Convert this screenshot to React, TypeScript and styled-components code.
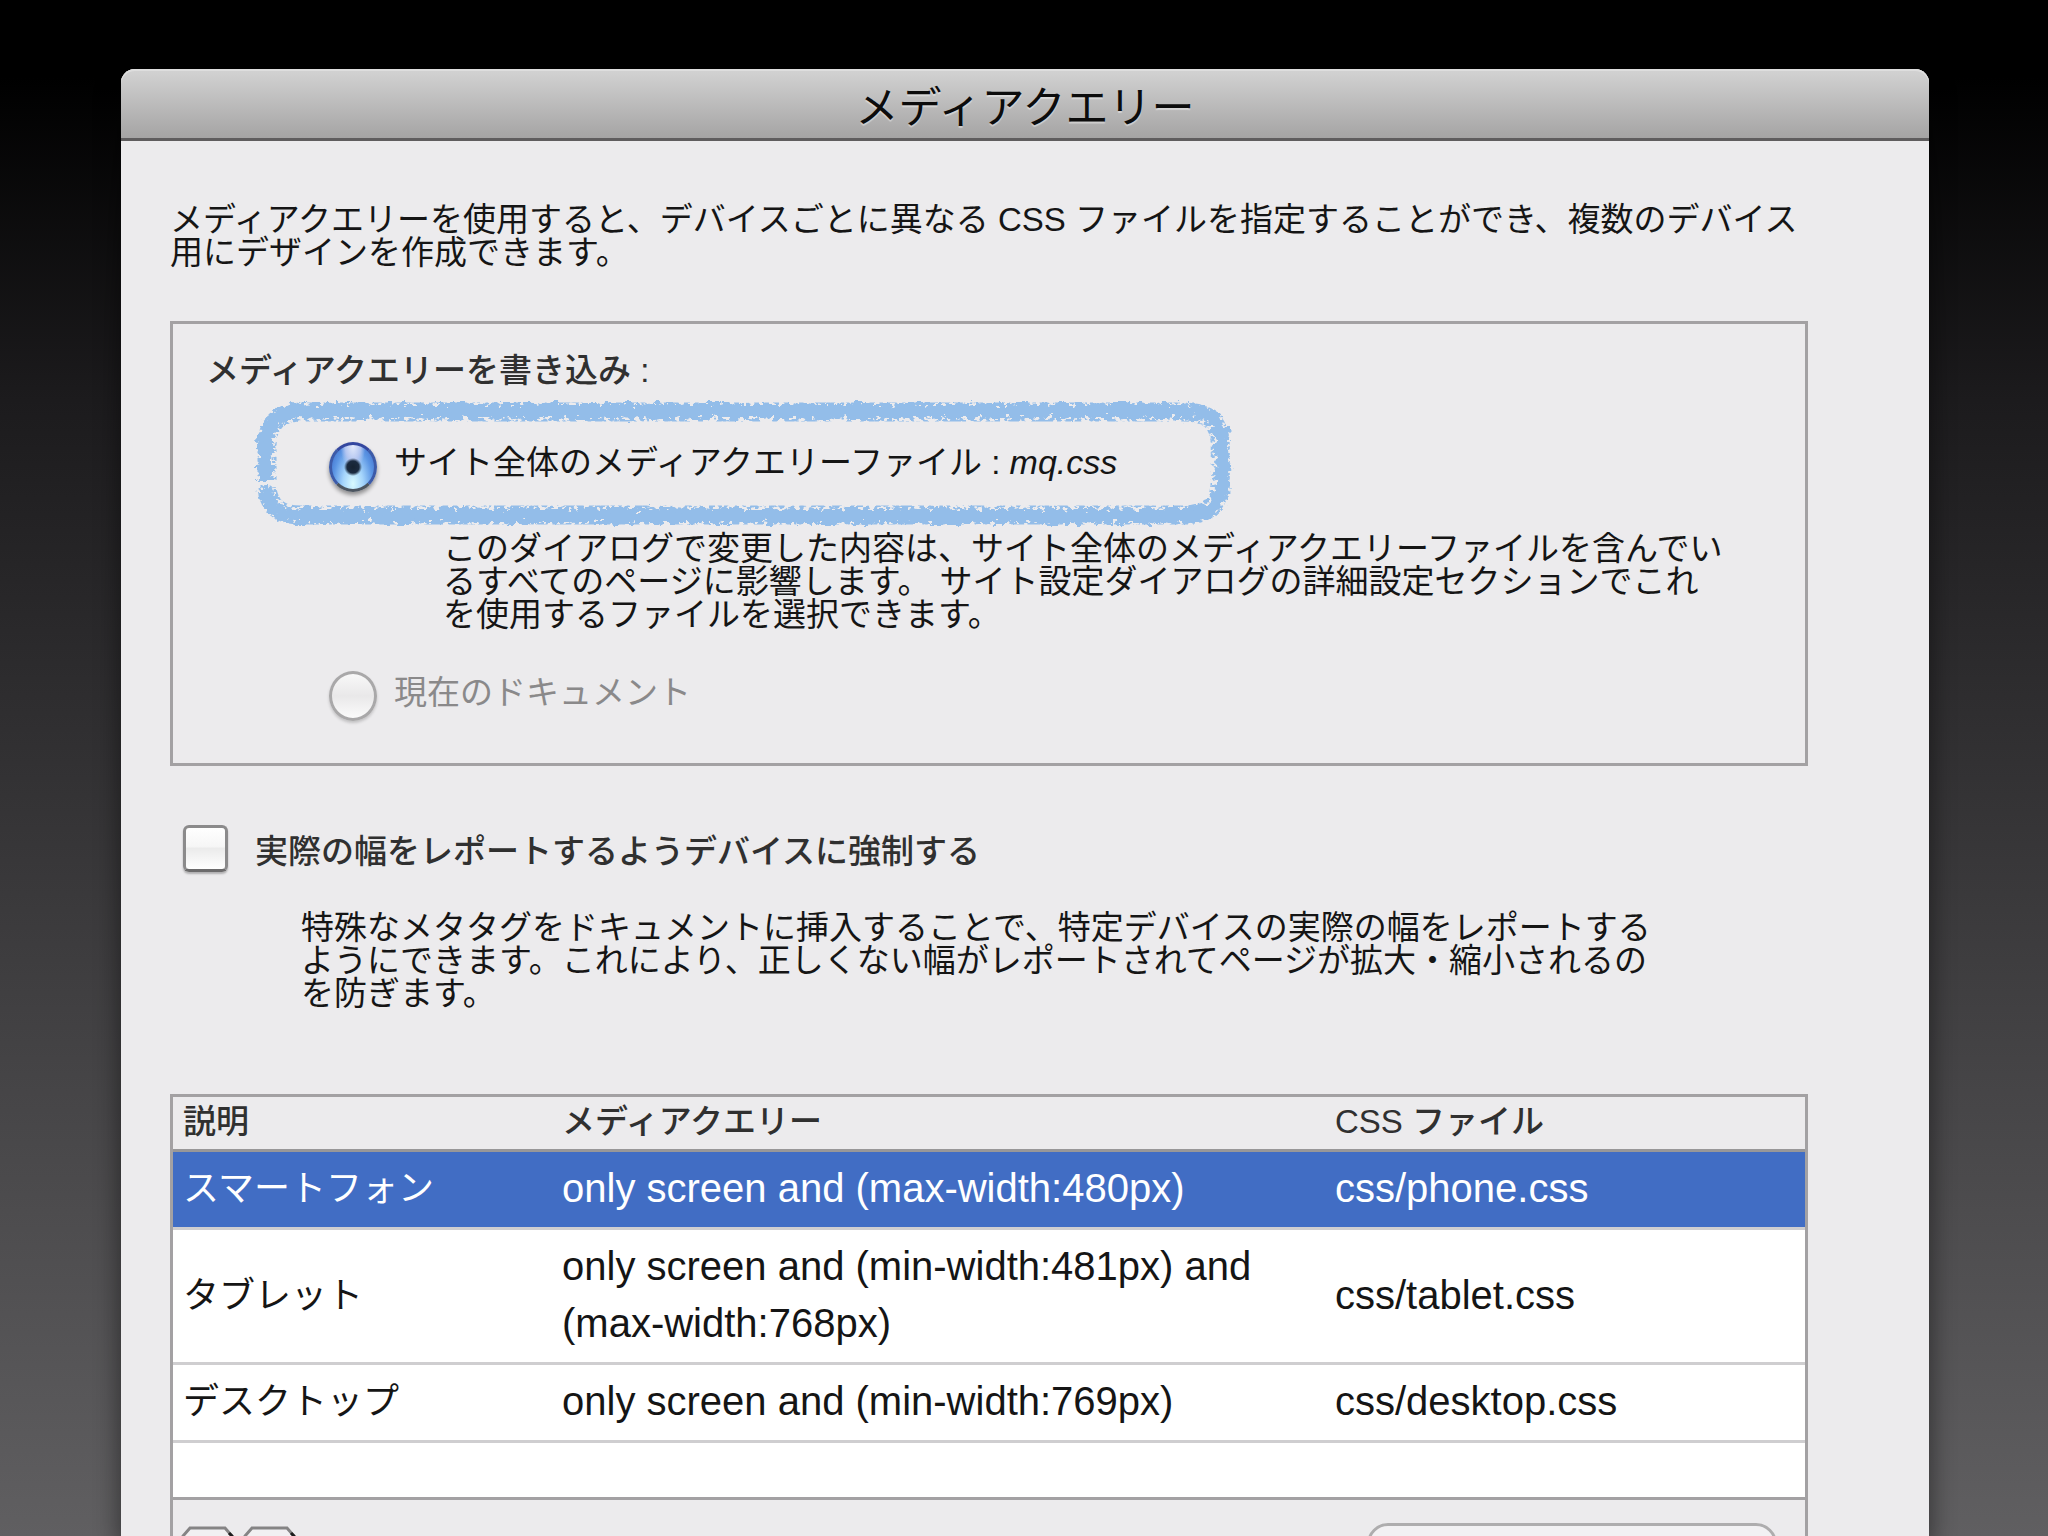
import React, { useState } from "react";
import styled, { createGlobalStyle, css } from "styled-components";

const GlobalStyle = createGlobalStyle`
  * { box-sizing: border-box; }
  body {
    margin: 0;
    font-family: "Liberation Sans", "Noto Sans CJK JP", sans-serif;
    font-size: 33px;
    line-height: 33px;
    color: #151515;
  }
`;

const Desktop = styled.div`
  display: flex;
  height: 100vh;
  overflow: hidden;
  padding: 69px 119px 0 121px;
  background: linear-gradient(#000 0, #000 5%, #1c1b1d 26%, #454446 70%, #605f61 100%);
`;

const Dialog = styled.main`
  flex: 1;
  min-width: 0;
  background: #ecebed;
  border-radius: 14px 14px 0 0;
  box-shadow: 0 10px 24px 2px rgba(0, 0, 0, 0.45);
`;

const TitleBar = styled.header`
  display: flex;
  justify-content: center;
  align-items: center;
  height: 72px;
  padding-top: 10px;
  border-bottom: 3px solid #5f5d5e;
  border-radius: 14px 14px 0 0;
  background: linear-gradient(#d3d3d3, #a5a4a4);
  box-shadow: inset 0 2px 0 #dedede;
`;

const Title = styled.h1`
  margin: 0;
  font-size: 43px;
  line-height: 43px;
  font-weight: 400;
  color: #0c0c0c;
  text-shadow: 0 2px 1px rgba(255, 255, 255, 0.4);
`;

const Content = styled.div`
  padding: 62px 121px 0 49px;
`;

const Paragraph = styled.p<{ $indent?: number }>`
  margin: 0;
  padding-left: ${(p) => p.$indent ?? 0}px;
  white-space: nowrap;
`;

const Group = styled.fieldset`
  margin: 52px 0 0;
  padding: 30px 30px 42px 33px;
  border: 3px solid #a3a1a3;
  min-width: 0;
`;

const Legend = styled.legend`
  float: left;
  width: 100%;
  padding: 0;
  font-weight: 500;
  color: #303030;
`;

const GroupBody = styled.div`
  clear: both;
  display: flex;
  flex-direction: column;
  align-items: flex-start;
  padding: 13px 0 0 48px;
`;

const Option = styled.label<{ $disabled?: boolean }>`
  position: relative;
  display: flex;
  align-items: center;
  gap: 17px;
  padding: 0 114px 0 75px;
  color: ${(p) => (p.$disabled ? "#8a898a" : "inherit")};
`;

const MarkedOption = styled(Option)`
  height: 125px;
`;

const FileName = styled.em`
  font-size: 34px;
`;

const OptionNote = styled(Paragraph)`
  margin: 7px 0 32px;
`;

const Marker = styled.svg`
  position: absolute;
  inset: 0;
  width: 100%;
  height: 100%;
  overflow: visible;
  pointer-events: none;
`;

const Radio = styled.input`
  appearance: none;
  flex: none;
  width: 48px;
  height: 50px;
  margin: 8px 0 0;
  border: 3px solid #a9a8a9;
  border-radius: 50%;
  background: linear-gradient(#f8f8f8, #e9e8e9 50%, #fbfbfb);
  box-shadow: 0 2px 3px rgba(0, 0, 0, 0.18);

  &:checked {
    border-color: #34479f #3d5ba8 #4c5560;
    background:
      radial-gradient(circle at 50% 50%, #162332 0, #1b2b40 6px, rgba(27, 43, 64, 0) 9px),
      radial-gradient(ellipse at 50% 0%, #e6ecfb 0, #b3c6f1 26%, rgba(120, 160, 230, 0) 42%),
      radial-gradient(ellipse at 50% 88%, #d8faff 0, #a4d4fb 34%, #5c96e4 66%, #3763c4 100%);
    box-shadow: 0 3px 4px rgba(0, 0, 0, 0.4);
  }
`;

const CheckRow = styled.label`
  display: flex;
  align-items: center;
  gap: 27px;
  margin: 59px 0 33px;
  padding-left: 13px;
  font-weight: 500;
  color: #303030;
`;

const Checkbox = styled.input`
  appearance: none;
  flex: none;
  width: 45px;
  height: 47px;
  margin: 0 0 6px;
  border: 3px solid #8b8a8b;
  border-bottom-color: #6c6b6c;
  border-radius: 6px;
  background: linear-gradient(#fff, #f6f6f6 45%, #ebebeb 50%, #fff);
  box-shadow: 0 2px 2px rgba(0, 0, 0, 0.25);

  &:checked {
    background: #5c96e4;
  }
`;

const ListPanel = styled.section`
  margin-top: 84px;
  border: 3px solid #a3a1a3;
  border-bottom: 0;
`;

const Table = styled.table`
  width: 100%;
  table-layout: fixed;
  border-collapse: separate;
  border-spacing: 0;
  background: #fff;
`;

const HeadCell = styled.th<{ $width?: number }>`
  width: ${(p) => (p.$width ? `${p.$width}px` : "auto")};
  height: 55px;
  padding: 0 10px 4px;
  text-align: left;
  font-weight: 500;
  color: #303030;
  background: #ecebed;
  border-bottom: 3px solid #989798;
`;

const Row = styled.tr<{ $selected?: boolean }>`
  cursor: default;
  ${(p) =>
    p.$selected &&
    css`
      color: #fff;
      background: #416dc4;
    `}
`;

const Cell = styled.td<{ $latin?: boolean }>`
  height: 78px;
  padding: 8px 10px 10px;
  font-size: ${(p) => (p.$latin ? 40 : 36)}px;
  line-height: 57px;
  border-bottom: 3px solid #cfced0;
`;

const BlankCell = styled.td`
  height: 57px;
  padding: 0;
  border-bottom: 3px solid #a3a1a3;
`;

const PanelFooter = styled.footer`
  display: flex;
  align-items: flex-start;
  padding: 23px 28px 0 8px;
`;

const SmallButtons = styled.div`
  display: flex;
  gap: 9px;
  padding-top: 3px;
  margin-right: auto;
`;

const SmallButton = styled.button`
  width: 53px;
  height: 53px;
  padding: 0;
  border: 0;
  background: none;
`;

const PresetButton = styled.button`
  width: 410px;
  height: 60px;
  border: 3px solid #aeadae;
  border-radius: 21px;
  background: #f2f1f3;
`;

const rows = [
  { name: "スマートフォン", query: "only screen and (max-width:480px)", file: "css/phone.css" },
  { name: "タブレット", query: "only screen and (min-width:481px) and (max-width:768px)", file: "css/tablet.css" },
  { name: "デスクトップ", query: "only screen and (min-width:769px)", file: "css/desktop.css" },
];

function CrayonOutline() {
  return (
    <Marker viewBox="0 0 976 125" preserveAspectRatio="none" aria-hidden="true">
      <defs>
        <filter id="crayon" x="-2%" y="-12%" width="104%" height="124%">
          <feTurbulence type="fractalNoise" baseFrequency="0.14 0.18" numOctaves="3" seed="7" result="noise" />
          <feDisplacementMap in="SourceGraphic" in2="noise" scale="15" xChannelSelector="R" yChannelSelector="G" />
        </filter>
        <filter id="flecks" x="-2%" y="-12%" width="104%" height="124%">
          <feTurbulence type="fractalNoise" baseFrequency="0.2 0.26" numOctaves="2" seed="21" />
          <feColorMatrix type="matrix" values="0 0 0 0 0  0 0 0 0 0  0 0 0 0 0  14 0 0 0 -6.6" result="grain" />
          <feComposite in="SourceGraphic" in2="grain" operator="in" />
        </filter>
      </defs>
      <g fill="none" stroke="#93bde9" strokeLinecap="butt">
        <path
          filter="url(#crayon)"
          strokeWidth="14"
          d="M11 88 C13 107 23 116 45 116 H930 C956 116 967 104 967 80 V46 C967 22 956 11 930 11 H49 C23 11 11 22 11 46 V80"
        />
        <path
          filter="url(#flecks)"
          strokeWidth="19"
          d="M13 88 C15 106 25 115 47 115 H928 C954 115 965 103 965 80 V46 C965 23 954 12 928 12 H49 C25 12 13 23 13 46 V80"
        />
      </g>
    </Marker>
  );
}

function BevelFrame() {
  return (
    <svg width="53" height="53" viewBox="0 0 53 53" fill="none" aria-hidden="true">
      <path d="M2 44V10L9 2H44L51 10V44L44 51H9Z" fill="#f1f0f2" stroke="#858485" strokeWidth="3" />
      <path d="M48 7L51 10V44" stroke="#1c1c1c" strokeWidth="3" />
    </svg>
  );
}

export default function App() {
  const [selected, setSelected] = useState(0);
  return (
    <>
      <GlobalStyle />
      <Desktop>
        <Dialog>
          <TitleBar>
            <Title>メディアクエリー</Title>
          </TitleBar>
          <Content>
            <Paragraph>
              メディアクエリーを使用すると、デバイスごとに異なる CSS ファイルを指定することができ、複数のデバイス
              <br />
              用にデザインを作成できます。
            </Paragraph>

            <Group>
              <Legend>メディアクエリーを書き込み :</Legend>
              <GroupBody>
                <MarkedOption>
                  <CrayonOutline />
                  <Radio type="radio" name="target" defaultChecked />
                  <span>
                    サイト全体のメディアクエリーファイル : <FileName>mq.css</FileName>
                  </span>
                </MarkedOption>
                <OptionNote $indent={189}>
                  このダイアログで変更した内容は、サイト全体のメディアクエリーファイルを含んでい
                  <br />
                  るすべてのページに影響します。 サイト設定ダイアログの詳細設定セクションでこれ
                  <br />
                  を使用するファイルを選択できます。
                </OptionNote>
                <Option $disabled>
                  <Radio type="radio" name="target" disabled />
                  <span>現在のドキュメント</span>
                </Option>
              </GroupBody>
            </Group>

            <CheckRow>
              <Checkbox type="checkbox" />
              <span>実際の幅をレポートするようデバイスに強制する</span>
            </CheckRow>
            <Paragraph $indent={131}>
              特殊なメタタグをドキュメントに挿入することで、特定デバイスの実際の幅をレポートする
              <br />
              ようにできます。これにより、正しくない幅がレポートされてページが拡大・縮小されるの
              <br />
              を防ぎます。
            </Paragraph>

            <ListPanel>
              <Table>
                <thead>
                  <tr>
                    <HeadCell $width={379}>説明</HeadCell>
                    <HeadCell $width={773}>メディアクエリー</HeadCell>
                    <HeadCell>CSS ファイル</HeadCell>
                  </tr>
                </thead>
                <tbody>
                  {rows.map((row, i) => (
                    <Row key={row.file} $selected={i === selected} onClick={() => setSelected(i)}>
                      <Cell>{row.name}</Cell>
                      <Cell $latin>{row.query}</Cell>
                      <Cell $latin>{row.file}</Cell>
                    </Row>
                  ))}
                  <tr>
                    <BlankCell colSpan={3} />
                  </tr>
                </tbody>
              </Table>
              <PanelFooter>
                <SmallButtons>
                  <SmallButton type="button" aria-label="追加">
                    <BevelFrame />
                  </SmallButton>
                  <SmallButton type="button" aria-label="削除">
                    <BevelFrame />
                  </SmallButton>
                </SmallButtons>
                <PresetButton type="button" disabled aria-label="プリセット" />
              </PanelFooter>
            </ListPanel>
          </Content>
        </Dialog>
      </Desktop>
    </>
  );
}
